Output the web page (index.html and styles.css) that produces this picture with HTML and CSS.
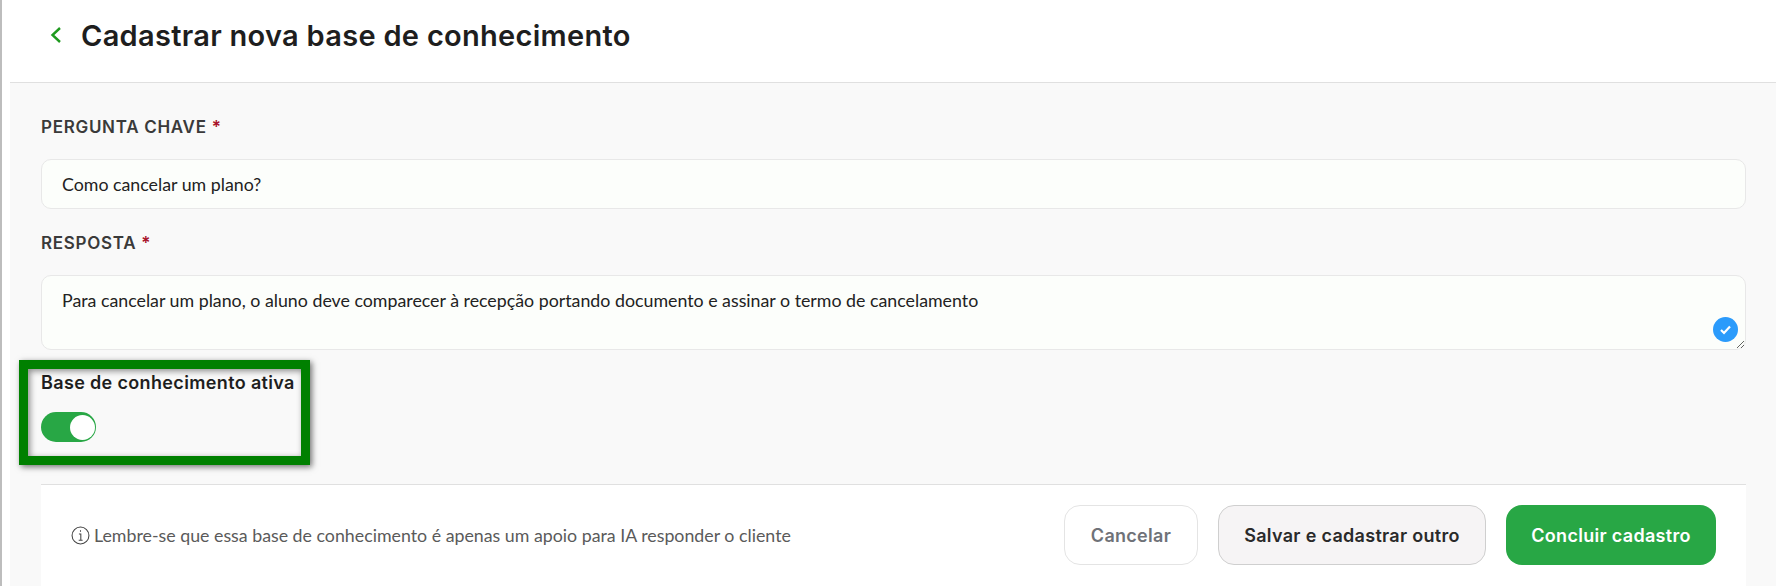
FILE: index.html
```html
<!DOCTYPE html>
<html lang="pt-BR">
<head>
  <meta charset="UTF-8" />
  <title>Cadastrar nova base de conhecimento</title>
  <link rel="stylesheet" href="styles.css">
</head>
<body>
  <div class="main">
    <div class="topbar">
      <svg class="back" width="14" height="18" viewBox="0 0 14 18">
        <path d="M12 2 L4.5 9 L12 16" fill="none" stroke="#1f9a1f" stroke-width="2.4"/>
      </svg>
      <h1>Cadastrar nova base de conhecimento</h1>
    </div>

    <div class="content">
      <label class="field-label">PERGUNTA CHAVE <span class="req">*</span></label>
      <input class="field" type="text" value="Como cancelar um plano?" />

      <label class="field-label second">RESPOSTA <span class="req">*</span></label>
      <div class="area-wrap">
        <textarea class="field area">Para cancelar um plano, o aluno deve comparecer à recepção portando documento e assinar o termo de cancelamento</textarea>
        <svg class="check" width="25" height="25" viewBox="0 0 25 25">
          <circle cx="12.5" cy="12.5" r="12.5" fill="#2b9bfb"/>
          <path d="M8 13 L11 16 L17 9.5" fill="none" stroke="#fff" stroke-width="2.2"/>
        </svg>
      </div>

      <div class="active-box">
        <div class="highlight"></div>
        <div class="active-label">Base de conhecimento ativa</div>
        <div class="toggle"><div class="knob"></div></div>
      </div>

      <div class="footer">
        <div class="hint">
          <svg width="19" height="19" viewBox="0 0 18 18">
            <circle cx="9" cy="9" r="8" fill="none" stroke="#444" stroke-width="1"/>
            <path d="M7.5 7.5 H9.3 V13.5 M7.3 13.5 H11 M9 4 V5.4" fill="none" stroke="#444" stroke-width="1"/>
          </svg>
          <span>Lembre-se que essa base de conhecimento é apenas um apoio para IA responder o cliente</span>
        </div>
        <div class="actions">
          <button class="btn btn-cancel">Cancelar</button>
          <button class="btn btn-save">Salvar e cadastrar outro</button>
          <button class="btn btn-done">Concluir cadastro</button>
        </div>
      </div>
    </div>
  </div>
</body>
</html>
```

FILE: styles.css
```css
* {
  box-sizing: border-box;
}

html, body {
  height: 586px;
  overflow: hidden;
}

body {
  margin: 0;
  background: #fff;
  border-left: 2px solid #bdbdbd;
  padding-left: 8px;
  font-family: Lato, sans-serif;
  color: #222;
}

.main {
  background: #f9f9f9;
  height: 586px;
}

.topbar {
  height: 83px;
  background: #fff;
  border-bottom: 1px solid #e0e0e0;
  display: flex;
  align-items: center;
  padding: 0 0 12px 38px;
}

.back {
  margin-right: 19px;
}

.topbar h1 {
  margin: 0;
  font-family: Inter, sans-serif;
  font-size: 29px;
  font-weight: 600;
  letter-spacing: 0.29px;
  color: #1e1e1e;
}

.content {
  padding: 35px 30px 0 31px;
}

.field-label {
  display: block;
  font-family: Inter, sans-serif;
  font-size: 17px;
  font-weight: 600;
  line-height: 18px;
  letter-spacing: 0.7px;
  color: #3a3a3a;
}

.field-label.second {
  margin-top: 25px;
}

.req {
  color: #a8122a;
}

.field {
  display: block;
  width: 100%;
  margin-top: 23px;
  background: #fcfefb;
  border: 1px solid #e8e8e8;
  border-radius: 10px;
  font-family: Lato, sans-serif;
  font-size: 17.8px;
  color: #222;
  padding: 0 20px;
  height: 50px;
  outline: none;
}

.area-wrap {
  position: relative;
  margin-top: 23px;
}

.area {
  margin-top: 0;
  height: 75px;
  padding: 13px 20px;
  resize: vertical;
}

.check {
  position: absolute;
  right: 8px;
  bottom: 8px;
}

.active-box {
  position: relative;
  margin-top: 23px;
  height: 111px;
}

.highlight {
  position: absolute;
  left: -22px;
  top: -13px;
  width: 291px;
  height: 105px;
  border: 9px solid #008000;
  box-shadow: 2px 2px 6px rgba(0, 0, 0, 0.55), inset 2px 2px 6px rgba(0, 0, 0, 0.45);
}

.active-label {
  font-family: Inter, sans-serif;
  font-size: 18px;
  font-weight: 600;
  line-height: 20px;
  letter-spacing: 0.35px;
  color: #1e1e1e;
}

.toggle {
  margin-top: 19px;
  width: 55px;
  height: 30px;
  border-radius: 15px;
  background: #28a745;
  position: relative;
}

.knob {
  position: absolute;
  right: 1px;
  top: 3px;
  width: 25px;
  height: 25px;
  border-radius: 50%;
  background: #fff;
}

.footer {
  border-top: 1px solid #e0e0e0;
  background: #fff;
  height: 102px;
  display: flex;
  align-items: flex-start;
  justify-content: space-between;
  padding: 20px 30px 0 30px;
}

.hint {
  display: flex;
  align-items: center;
  gap: 4px;
  height: 60px;
  font-size: 17.8px;
  color: #5a5a5a;
}

.actions {
  display: flex;
  gap: 20px;
}

.btn {
  height: 60px;
  border-radius: 16px;
  font-family: Inter, sans-serif;
  font-size: 18px;
  font-weight: 600;
  letter-spacing: 0.3px;
  cursor: pointer;
}

.btn-cancel {
  width: 134px;
  background: #fff;
  border: 1px solid #e4e4e4;
  color: #6f7278;
}

.btn-save {
  width: 268px;
  background: #f6f4f5;
  border: 1px solid #cfcfcf;
  color: #2a2a2a;
}

.btn-done {
  width: 210px;
  background: #28a745;
  border: none;
  color: #fff;
}
```
